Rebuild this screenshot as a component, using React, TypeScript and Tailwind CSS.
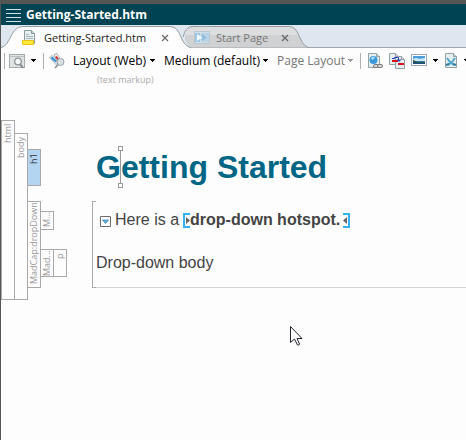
import React from "react";

const uiFont = "font-['Open_Sans','Noto_Sans',sans-serif]";

function Caret({ muted = false }: { muted?: boolean }) {
  return (
    <svg width="6" height="4" viewBox="0 0 6 4" className={muted ? "text-[#999]" : "text-black"} shapeRendering="crispEdges">
      <path d="M0 0h5v1H0zM1 1h3v1H1zM2 2h1v1H2z" fill="currentColor" />
    </svg>
  );
}

function Separator() {
  return <span className="h-4 w-px shrink-0 bg-[#b0b0b0]" />;
}

function MenuIcon() {
  return (
    <svg width="15" height="14" viewBox="0 0 15 14" shapeRendering="crispEdges">
      <path d="M0 1.5h15M0 5.5h15M0 9.5h15M0 13.5h15" stroke="#d5e3e8" />
    </svg>
  );
}

function TopicIcon() {
  return (
    <svg width="14" height="16" viewBox="0 0 14 16">
      <path d="M2.5.5h7l3 3v10h-10z" fill="#e6eef0" stroke="#8b9a9c" />
      <path d="M9.5.5v3h3" fill="#c8d4d6" stroke="#8b9a9c" />
      <path d="M4 4.5h3M4 6.5h7M4 8.5h7" stroke="#a5b8bb" />
      <path d="M.5 10.5h11v4H.5z" fill="#ffe838" stroke="#e8c31a" />
    </svg>
  );
}

function StartPageIcon() {
  return (
    <svg width="16" height="14" viewBox="0 0 16 14">
      <rect x=".5" y=".5" width="15" height="12" fill="#cfe0ec" stroke="#b9c6cf" />
      <rect x="1" y="2" width="5" height="9" fill="#9cc8e6" />
      <rect x="7" y="2" width="8" height="9" fill="#b9d4e7" />
      <path d="M3 3l5 3.5-5 3.5z" fill="#f4f9fc" />
      <path d="M8 3l5 3.500-5 3.500z" fill="#93bfe0" />
    </svg>
  );
}

function PreviewIcon() {
  return (
    <svg width="16" height="15" viewBox="0 0 16 15">
      <rect x=".5" y=".5" width="15" height="13" fill="#dfe3e3" stroke="#a4abab" />
      <path d="M1 2.5h14" stroke="#b8bfbf" />
      <path d="M11 10l3 4" stroke="#82898a" strokeWidth="2" />
      <circle cx="9" cy="7.500" r="3.300" fill="#f3f6f6" stroke="#8d9495" strokeWidth="1.300" />
    </svg>
  );
}

function TagsIcon() {
  return (
    <svg width="16" height="16" viewBox="0 0 16 16">
      <path d="M.5 4.500L3 2.500l7 6-3 3z" fill="#dceaf4" stroke="#8da4b2" strokeWidth=".8" />
      <path d="M5 1.500L8 .5l4 7-3.500 2z" fill="#f5f5f5" stroke="#999" strokeWidth=".8" />
      <path d="M2.500 4.500l4.500 4" stroke="#338fcb" strokeWidth="2" />
      <path d="M7 3.500L9.500 7" stroke="#d8272f" strokeWidth="2" />
      <circle cx="11.500" cy="9" r="3.500" fill="#d9dfe2" stroke="#9aa3a7" />
      <path d="M9 11.500L6 15" stroke="#858e92" strokeWidth="1.500" />
    </svg>
  );
}

function Page({ x = 0, y = 0, w = 11, h = 14 }: { x?: number; y?: number; w?: number; h?: number }) {
  return (
    <g transform={`translate(${x} ${y})`}>
      <path d={`M.5.5h${w - 4}l3 3v${h - 4}H.5z`} fill="#e7eef0" stroke="#92a2a6" />
      <path d={`M${w - 3.5}.5v3h3`} fill="#c8d5d8" stroke="#92a2a6" />
    </g>
  );
}

function HyperlinkIcon() {
  return (
    <svg width="15" height="16" viewBox="0 0 15 16">
      <Page w={12} h={15} />
      <circle cx="5.500" cy="7" r="4" fill="#3998da" />
      <path d="M3 5q2-2 4-1l-1 2-2 1z" fill="#a9dcf7" />
      <rect x="5.500" y="11.500" width="5" height="3" rx="1.500" fill="#ddd" stroke="#777" />
      <rect x="9.500" y="11.500" width="5" height="3" rx="1.500" fill="#ddd" stroke="#777" />
    </svg>
  );
}

function CrossReferenceIcon() {
  return (
    <svg width="17" height="16" viewBox="0 0 17 16">
      <Page w={10} h={12} />
      <Page x={6} y={3} w={10} h={13} />
      <path d="M3 8h6M9 11h6" stroke="#d3131d" strokeWidth="2" />
      <path d="M3 5.500h2M5.500 6V4.500h4V7" fill="none" stroke="#2948b4" />
      <path d="M7.500 6.500h5L10 9z" fill="#2948b4" />
    </svg>
  );
}

function PictureIcon() {
  return (
    <svg width="16" height="15" viewBox="0 0 16 15">
      <rect x=".5" y=".5" width="15" height="11" fill="#fff" stroke="#9aa9b5" />
      <rect x="2" y="2" width="12" height="8" fill="#4c9ddf" />
      <path d="M2 5q4-2 6 0l6-1v3H2z" fill="#cbe7f8" />
      <path d="M2 6l4 1.500h8V10H2z" fill="#26594f" />
      <path d="M2 9.500h12" stroke="#204d8a" />
    </svg>
  );
}

function SnippetIcon() {
  return (
    <svg width="13" height="16" viewBox="0 0 13 16">
      <Page w={12} h={15} />
      <path d="M2 5l3 4 4 3M10 5L7 9l-4 3" fill="none" stroke="#4da7c6" strokeWidth="2" />
      <path d="M1 12l3-1M11 12l-3-1" stroke="#2c7ca3" strokeWidth="2" />
    </svg>
  );
}

function CloseButton({ label }: { label: string }) {
  return (
    <button aria-label={label} className="flex h-4 w-4 items-center justify-center">
      <svg width="8" height="8" viewBox="0 0 8 8">
        <path d="M1 1l6 6M7 1L1 7" stroke="#666" strokeWidth="1.200" />
      </svg>
    </button>
  );
}

function ToolSelect({ label, value, className, muted = false }: { label: string; value: string; className: string; muted?: boolean }) {
  return (
    <span className="flex shrink-0 items-center">
      <select
        aria-label={label}
        disabled={muted}
        className={`appearance-none bg-transparent text-xs leading-4 opacity-100 ${className} ${muted ? "text-[#777]" : "text-black"}`}
      >
        <option>{value}</option>
      </select>
      <Caret muted={muted} />
    </span>
  );
}

function Block({ name, className }: { name: string; className: string }) {
  return (
    <div className={`w-[14px] shrink-0 border border-[#a9a9a9] ${className}`}>
      <span className="block h-full w-full rotate-180 text-right text-[9px] leading-3 whitespace-nowrap [writing-mode:vertical-rl]">
        {name}
      </span>
    </div>
  );
}

function StructureBars() {
  return (
    <aside className={`flex shrink-0 items-start text-[#999] ${uiFont}`}>
      <Block name="html" className="h-[180px] py-[3px]" />
      <Block name="body" className="-ml-px mt-[13px] h-[167px] py-[3px]" />
      <div className="-ml-px mt-[29px]">
        <Block name="h1" className="h-[37px] bg-[#b3d5f2] py-[3px] text-[#333]" />
        <div className="mt-[15px] flex items-start">
          <Block name="MadCap:dropDown" className="h-[87px] py-[3px]" />
          <div className="-ml-px mt-[10px]">
            <Block name="M..." className="h-[19px]" />
            <div className="mt-[19px] flex">
              <Block name="Mad..." className="h-[28px]" />
              <Block name="p" className="-ml-px h-[28px] py-[3px]" />
            </div>
          </div>
        </div>
      </div>
    </aside>
  );
}

function TextCaret() {
  return (
    <svg width="5" height="42" viewBox="0 0 5 42" className="absolute left-[22px] -top-[3px]" shapeRendering="crispEdges">
      <path d="M2.5 5v32M.5.5h4v4h-4zM.5 37.5h4v4h-4z" fill="none" stroke="#999" />
    </svg>
  );
}

function HotspotMark({ end = false }: { end?: boolean }) {
  return (
    <svg width="7" height="15" viewBox="0 0 7 15" className={`shrink-0 ${end ? "rotate-180" : ""}`}>
      <path d="M7 1H1v13h6" fill="none" stroke="#35b0f5" strokeWidth="2" />
      <path d="M3 4l4 3.500L3 11z" fill="#666" />
    </svg>
  );
}

function Document() {
  return (
    <main className="min-w-0 flex-1 font-['Liberation_Sans',Arial,sans-serif] text-[#444]">
      <div className="relative ml-1">
        <h1 className="text-[32px] leading-9 font-bold text-[#006685]">Getting Started</h1>
        <TextCaret />
      </div>
      <section className="mt-4 flex h-[87px]">
        <div className="w-1 shrink-0 border-y border-l border-[#a9a9a9]" />
        <div className="min-w-0 flex-1 border-b border-[#d4d4d4] text-base leading-5">
          <p className="mt-[9px] flex items-center whitespace-nowrap">
            <svg width="11" height="11" viewBox="0 0 11 11" className="mx-1 mt-0.5 shrink-0">
              <path d="M.5.5h10v10H.5z" fill="#fff" stroke="#6d6d6d" />
              <path d="M2.500 4h6l-3 3.500z" fill="#62b5e6" stroke="#2877ad" strokeWidth=".7" />
            </svg>
            <span className="mr-1">Here is a</span>
            <HotspotMark />
            <strong className="mr-[3px]">drop-down hotspot.</strong>
            <HotspotMark end />
          </p>
          <p className="mt-[23px]">Drop-down body</p>
        </div>
      </section>
    </main>
  );
}

export default function App() {
  return (
    <div className="relative min-h-screen overflow-hidden border-l border-t-4 border-[#555] bg-[#fdfdfd]">
      <header className={`flex h-[21px] items-center gap-[5px] bg-[#004453] pl-[5px] text-xs font-bold text-white ${uiFont}`}>
        <button aria-label="Menu">
          <MenuIcon />
        </button>
        <span className="leading-4">Getting-Started.htm</span>
      </header>

      <nav className={`relative flex h-[23px] items-center border-b border-[#a1a6ab] bg-[#dee7f0] text-[11px] ${uiFont}`}>
        <svg width="310" height="23" viewBox="0 0 310 23" className="absolute left-0 top-0">
          <defs>
            <linearGradient id="idleTab" x1="0" y1="0" x2="0" y2="1">
              <stop offset=".38" stopColor="#dcdedf" />
              <stop offset=".4" stopColor="#cfd1d2" />
            </linearGradient>
          </defs>
          <path d="M190 22.500C180 16 184 1.500 192 1.500H288C299 1.500 297 18 307 22.500z" fill="url(#idleTab)" />
          <path d="M182 12C184 6 186 1.500 192 1.500H288C299 1.500 297 18 307 22.500" fill="none" stroke="#969ca1" />
          <path d="M0 22.500C10 21 9 1.500 22 1.500H169C181 1.500 178 19 189 22.500V23H0z" fill="#fdfdfd" />
          <path d="M0 22.500C10 21 9 1.500 22 1.500H169C181 1.500 178 19 189 22.500" fill="none" stroke="#969ca1" />
        </svg>
        <div className="relative flex w-[172px] items-center pl-[21px] pt-1">
          <TopicIcon />
          <span className="ml-2 flex-1 leading-4 text-[#222]">Getting-Started.htm</span>
          <CloseButton label="Close Getting-Started.htm" />
        </div>
        <div className="relative flex w-[120px] items-center pl-[21px] pt-1">
          <StartPageIcon />
          <span className="ml-[6px] flex-1 leading-4 text-[#777]">Start Page</span>
          <CloseButton label="Close Start Page" />
        </div>
      </nav>

      <div className={`flex h-6 items-center pl-[3px] pt-0.5 ${uiFont}`}>
        <Separator />
        <button aria-label="Preview" className="ml-1 flex shrink-0 items-center gap-[6px]">
          <PreviewIcon />
          <Caret />
        </button>
        <span className="ml-[6px] flex"><Separator /></span>
        <button aria-label="Show tags" className="ml-[5px] mr-2 shrink-0">
          <TagsIcon />
        </button>
        <ToolSelect label="Layout" value="Layout (Web)" className="w-[77px]" />
        <span className="w-2 shrink-0" />
        <ToolSelect label="Medium" value="Medium (default)" className="w-[99px]" />
        <span className="w-2 shrink-0" />
        <ToolSelect label="Page layout" value="Page Layout" className="w-[71px]" muted />
        <span className="ml-[6px] mr-[7px] flex"><Separator /></span>
        <button aria-label="Insert hyperlink" className="mr-[6px] shrink-0"><HyperlinkIcon /></button>
        <button aria-label="Insert cross-reference" className="mr-[5px] shrink-0"><CrossReferenceIcon /></button>
        <button aria-label="Insert picture" className="mr-[6px] flex shrink-0 items-center gap-[6px]">
          <PictureIcon />
          <Caret />
        </button>
        <button aria-label="Insert snippet" className="flex shrink-0 items-center gap-[6px]">
          <SnippetIcon />
          <Caret />
        </button>
      </div>

      <p className={`mt-[1px] pl-24 text-[9px] leading-[14px] text-[#aaa] ${uiFont}`}>(text markup)</p>

      <div className="mt-[33px] flex items-start">
        <div className="w-[91px] shrink-0">
          <StructureBars />
        </div>
        <div className="min-w-0 flex-1 pt-[29px]">
          <Document />
        </div>
      </div>

      <svg width="13" height="21" viewBox="0 0 13 21" className="absolute left-[289px] top-[322px]">
        <path d="M.5.5v16l4-3.500 3 6q1.500.5 2-1l-2.500-5.500h5z" fill="#fff" stroke="#22222f" />
      </svg>
    </div>
  );
}
